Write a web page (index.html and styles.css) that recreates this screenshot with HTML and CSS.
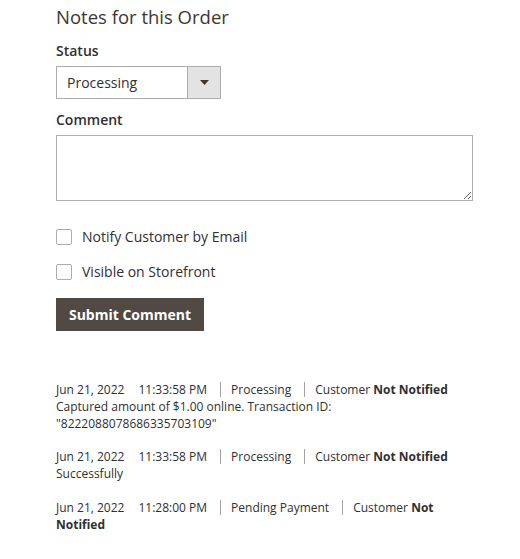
FILE: index.html
```html
<!DOCTYPE html>
<html lang="en">
<head>
<meta charset="utf-8">
<title>Notes for this Order</title>
<link rel="stylesheet" href="styles.css">
</head>
<body>
<div class="page">
  <h2 class="title">Notes for this Order</h2>
  <div class="field">
    <label class="label">Status</label>
    <div class="select">
      <span class="select-value">Processing</span>
      <span class="select-btn"><svg width="9" height="5" viewBox="0 0 9 5"><path d="M0 0h9L4.5 5z" fill="#41362f"/></svg></span>
    </div>
  </div>
  <div class="field field-comment">
    <label class="label">Comment</label>
    <textarea class="textarea"></textarea>
  </div>
  <div class="checks">
    <label class="check"><span class="box"></span><span>Notify Customer by Email</span></label>
    <label class="check"><span class="box"></span><span>Visible on Storefront</span></label>
  </div>
  <button class="submit" type="button">Submit Comment</button>
  <ul class="notes">
    <li class="note">
      <div class="meta"><span class="date">Jun 21, 2022</span><span class="time">11:33:58 PM</span><i class="bar"></i>Processing<i class="bar"></i>Customer <b>Not Notified</b></div>
      <div class="comment">Captured amount of $1.00 online. Transaction ID: "8222088078686335703109"</div>
    </li>
    <li class="note">
      <div class="meta"><span class="date">Jun 21, 2022</span><span class="time">11:33:58 PM</span><i class="bar"></i>Processing<i class="bar"></i>Customer <b>Not Notified</b></div>
      <div class="comment">Successfully</div>
    </li>
    <li class="note note-last">
      <div class="meta"><span class="date">Jun 21, 2022</span><span class="time">11:28:00 PM</span><i class="bar"></i>Pending Payment<i class="bar"></i>Customer <b>Not</b> <b>Notified</b></div>
    </li>
  </ul>
</div>
</body>
</html>
```
FILE: styles.css
```css
html, body {
  margin: 0;
  padding: 0;
  background: #ffffff;
}
body {
  font-family: "Open Sans", "Liberation Sans", sans-serif;
  color: #303030;
}
.page {
  width: 417px;
  padding: 5px 0 0 56px;
}
.title {
  margin: 0;
  font-size: 18.5px;
  line-height: 24px;
  font-weight: 400;
  color: #41362f;
}
.field {
  display: flex;
  flex-direction: column;
  gap: 5px;
  margin-top: 12px;
}
.field-comment {
  margin-top: 11px;
}
.label {
  font-size: 14px;
  line-height: 20px;
  font-weight: 600;
  color: #303030;
}
.select {
  display: flex;
  width: 163px;
  height: 31px;
  border: 1px solid #adadad;
  background: #fff;
}
.select-value {
  flex: 1;
  padding-left: 10px;
  font-size: 14px;
  line-height: 31px;
  color: #303030;
}
.select-btn {
  width: 32px;
  border-left: 1px solid #adadad;
  background: #e3e3e3;
  display: flex;
  align-items: center;
  justify-content: center;
}
.textarea {
  display: block;
  box-sizing: border-box;
  width: 417px;
  height: 66px;
  margin: 0;
  border: 1px solid #adadad;
  border-radius: 0;
  padding: 6px 10px;
  font-family: inherit;
  font-size: 14px;
  outline: none;
}
.checks {
  display: flex;
  flex-direction: column;
  gap: 19px;
  margin-top: 28px;
}
.check {
  display: flex;
  align-items: center;
  gap: 10px;
  font-size: 14px;
  line-height: 16px;
  color: #303030;
}
.box {
  box-sizing: border-box;
  width: 16px;
  height: 16px;
  border: 1px solid #adadad;
  border-radius: 2px;
  background: #fff;
}
.submit {
  display: block;
  margin-top: 18px;
  width: 148px;
  height: 33px;
  padding: 0;
  border: none;
  border-radius: 0;
  background: #514943;
  color: #ffffff;
  font-family: inherit;
  font-size: 14px;
  font-weight: 700;
}
.notes {
  list-style: none;
  margin: 50px 0 0;
  padding: 0;
  font-size: 12px;
  line-height: 17px;
  color: #303030;
}
.note + .note {
  margin-top: 16px;
}
.note + .note-last {
  margin-top: 17px;
}
.time {
  margin-left: 14px;
}
.bar {
  display: inline-block;
  width: 1px;
  height: 15px;
  margin: 0 10px 0 13px;
  background: #a3a3a3;
  vertical-align: -3px;
}
.meta b {
  font-weight: 700;
}
```
